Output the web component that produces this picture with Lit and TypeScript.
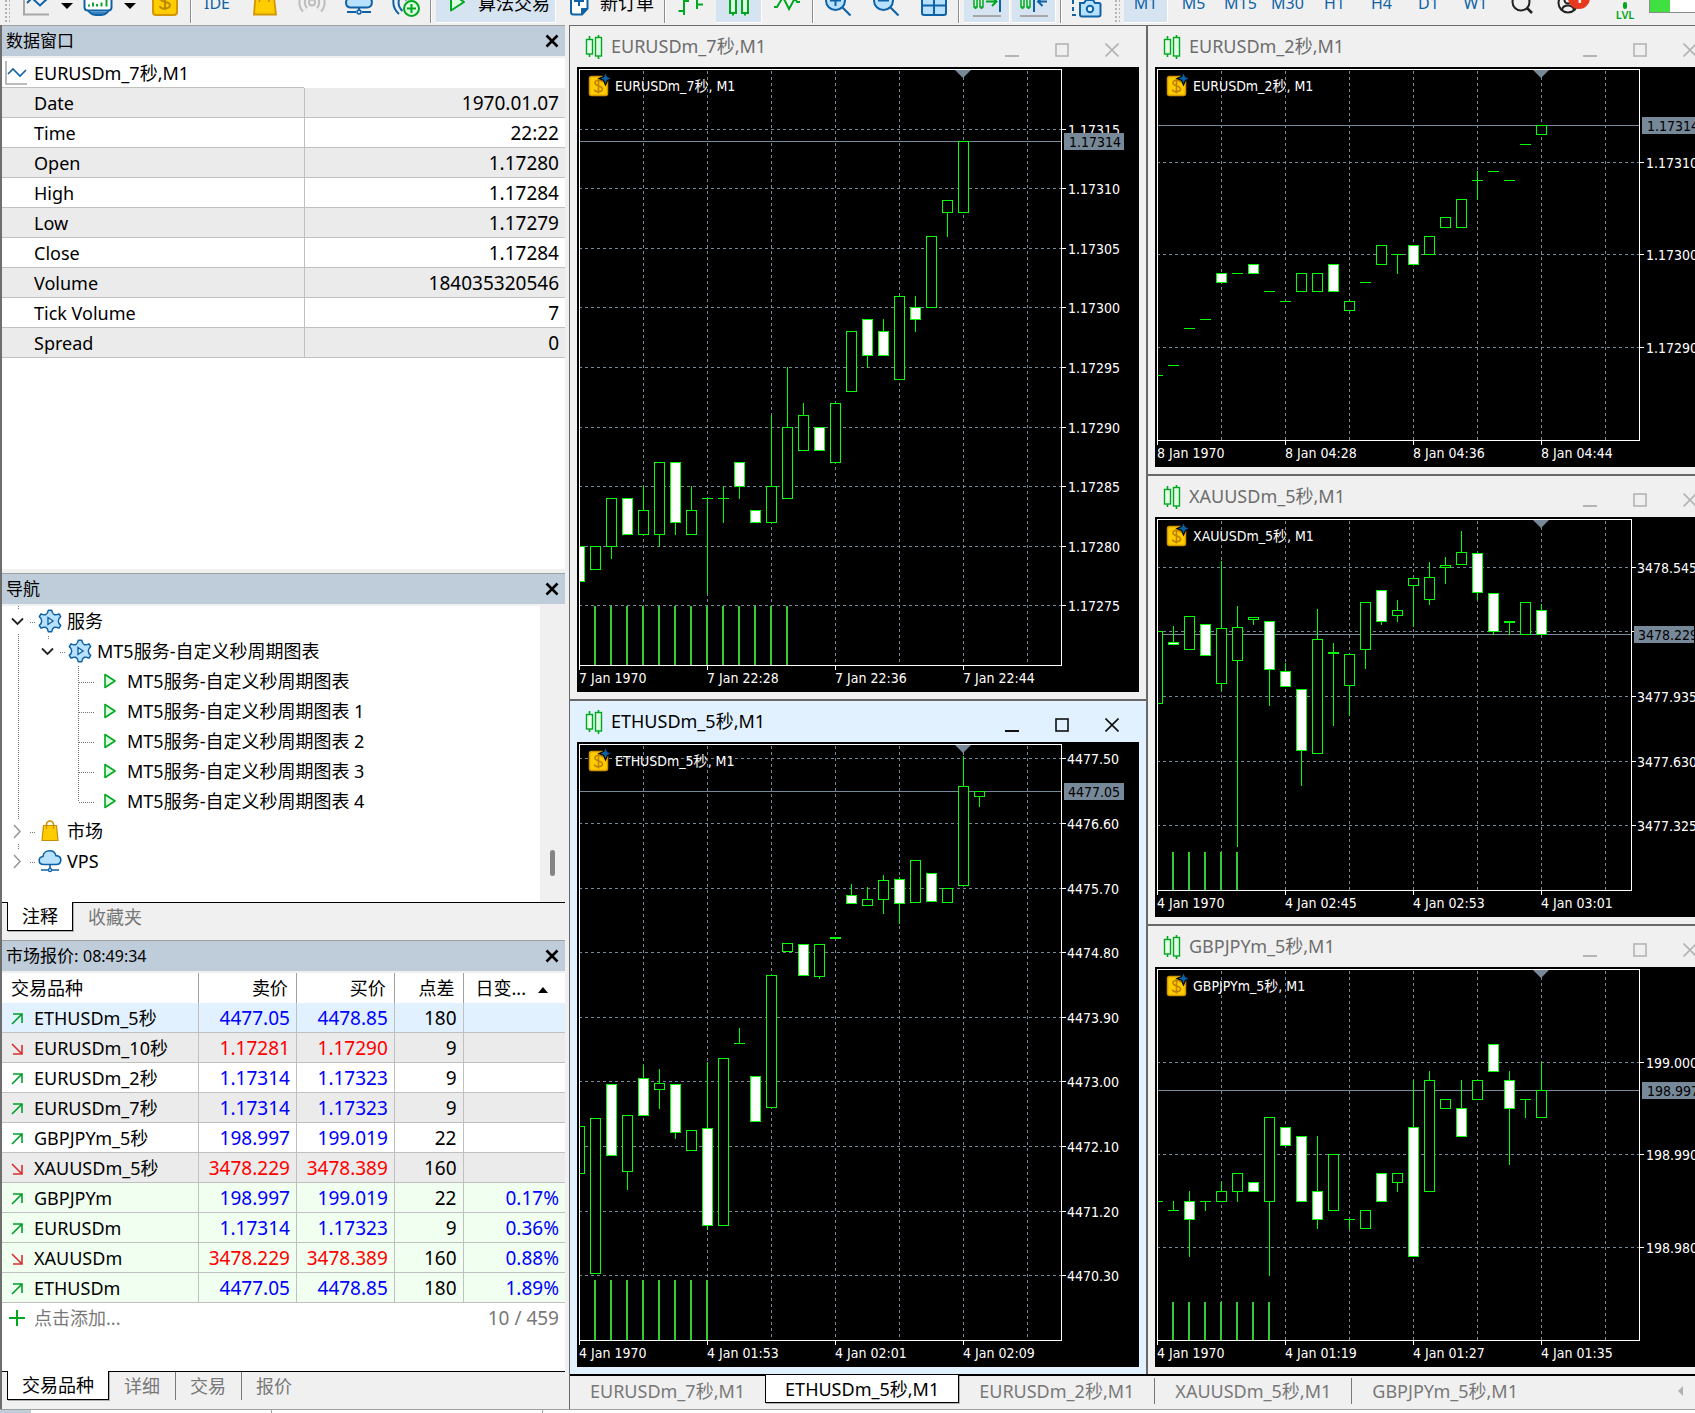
import { LitElement, html, svg, css, nothing } from "lit";
import { customElement, property } from "lit/decorators.js";
import { classMap } from "lit/directives/class-map.js";

/* ------------------------------------------------------------------ data */

/** slot, kind (h hollow, w white, d dash), body top, body bottom, wick high, wick low */
type Bar = [number, "h" | "w" | "d", number, number, number?, number?];

interface Chart {
  name: string;
  active?: boolean;
  height: number;
  frame: number;
  labelX: number;
  /** value of a level and pixels for one level; without it values are pixels */
  scale?: { ref: number; y: number; step: number };
  grid: [number, string][];
  last: [number, string];
  times: string[];
  volumeTop: number;
  volumes: number;
  bars: Bar[];
}

const eur7: Chart = {
  name: "EURUSDm_7秒",
  height: 625,
  frame: 484,
  labelX: 491,
  scale: { ref: 315, y: 62.3, step: 11.91 },
  grid: [
    [315, "1.17315"], [310, "1.17310"], [305, "1.17305"], [300, "1.17300"], [295, "1.17295"],
    [290, "1.17290"], [285, "1.17285"], [280, "1.17280"], [275, "1.17275"],
  ],
  last: [314, "1.17314"],
  times: ["7 Jan 1970", "7 Jan 22:28", "7 Jan 22:36", "7 Jan 22:44"],
  volumeTop: 539,
  volumes: 13,
  bars: [
    [0, "w", 280, 277], [1, "h", 280, 278], [2, "h", 284, 280, 284, 279], [3, "w", 284, 281],
    [4, "h", 283, 281, 285, 281], [5, "h", 287, 281, 287, 280], [6, "w", 287, 282, 287, 281],
    [7, "h", 283, 281, 285, 281], [8, "d", 284, 284, 284, 276], [9, "d", 284, 284, 285, 282],
    [10, "w", 287, 285, 287, 284], [11, "w", 283, 282], [12, "h", 285, 282, 291, 282],
    [13, "h", 290, 284, 295, 284], [14, "h", 291, 288, 292, 288], [15, "w", 290, 288],
    [16, "h", 292, 287], [17, "h", 298, 293], [18, "w", 299, 296, 299, 295],
    [19, "w", 298, 296, 299, 296], [20, "h", 301, 294], [21, "w", 300, 299, 301, 298],
    [22, "h", 306, 300], [23, "h", 309, 308, 309, 306], [24, "h", 314, 308],
  ],
};

const eth: Chart = {
  name: "ETHUSDm_5秒",
  active: true,
  height: 625,
  frame: 484,
  labelX: 490,
  grid: [
    [16, "4477.50"], [81, "4476.60"], [146, "4475.70"], [210, "4474.80"], [275, "4473.90"],
    [339, "4473.00"], [404, "4472.10"], [469, "4471.20"], [533, "4470.30"],
  ],
  last: [49, "4477.05"],
  times: ["4 Jan 1970", "4 Jan 01:53", "4 Jan 02:01", "4 Jan 02:09"],
  volumeTop: 538,
  volumes: 8,
  bars: [
    [0, "h", 384, 431], [1, "h", 376, 531], [2, "w", 342, 413], [3, "h", 373, 429, 373, 447],
    [4, "w", 336, 373, 323, 373], [5, "h", 341, 347, 327, 366], [6, "w", 342, 390, 342, 396],
    [7, "h", 388, 408], [8, "w", 386, 483, 320, 487], [9, "h", 316, 483], [10, "d", 301, 301, 286, 301],
    [11, "w", 334, 379], [12, "h", 233, 365], [13, "h", 201, 209], [14, "w", 202, 233],
    [15, "h", 202, 234, 202, 236], [16, "h", 195, 196], [17, "w", 153, 161, 142, 161],
    [18, "h", 157, 163, 145, 163], [19, "h", 138, 157, 133, 171], [20, "w", 137, 161, 135, 181],
    [21, "h", 118, 160], [22, "w", 131, 159], [23, "h", 146, 160], [24, "h", 44, 143, 14, 143],
    [25, "h", 49, 54, 49, 64],
  ],
};

const eur2: Chart = {
  name: "EURUSDm_2秒",
  height: 400,
  frame: 484,
  labelX: 491,
  scale: { ref: 310, y: 95.5, step: 9.24 },
  grid: [[310, "1.17310"], [300, "1.17300"], [290, "1.17290"]],
  last: [314, "1.17314"],
  times: ["8 Jan 1970", "8 Jan 04:28", "8 Jan 04:36", "8 Jan 04:44"],
  volumeTop: 335,
  volumes: 0,
  bars: [
    [0, "d", 287, 287], [1, "d", 288, 288], [2, "d", 292, 292], [3, "d", 293, 293], [4, "w", 298, 297],
    [5, "d", 298, 298], [6, "w", 299, 298], [7, "d", 296, 296], [8, "d", 295, 295], [9, "h", 298, 296],
    [10, "h", 298, 296], [11, "w", 299, 296], [12, "h", 295, 294], [13, "d", 297, 297],
    [14, "h", 301, 299], [15, "d", 300, 300, 300, 298], [16, "w", 301, 299], [17, "h", 302, 300],
    [18, "h", 304, 303], [19, "h", 306, 303], [20, "d", 308, 308, 309, 306], [21, "d", 309, 309],
    [22, "d", 308, 308], [23, "d", 312, 312], [24, "h", 314, 313],
  ],
};

const xau: Chart = {
  name: "XAUUSDm_5秒",
  height: 400,
  frame: 476,
  labelX: 482,
  grid: [[50, "3478.545"], [114, ""], [179, "3477.935"], [244, "3477.630"], [308, "3477.325"]],
  last: [117, "3478.229"],
  times: ["4 Jan 1970", "4 Jan 02:45", "4 Jan 02:53", "4 Jan 03:01"],
  volumeTop: 335,
  volumes: 5,
  bars: [
    [0, "h", 114, 186], [1, "w", 125, 127, 109, 127], [2, "h", 99, 132], [3, "w", 107, 138],
    [4, "h", 111, 166, 44, 173], [5, "h", 110, 143, 89, 329], [6, "h", 100, 102, 100, 107],
    [7, "w", 104, 152, 104, 188], [8, "w", 154, 169, 146, 169], [9, "w", 172, 233, 172, 268],
    [10, "h", 122, 236, 92, 236], [11, "h", 135, 136, 126, 208], [12, "h", 137, 168, 137, 198],
    [13, "h", 85, 132, 85, 151], [14, "w", 73, 104, 73, 107], [15, "h", 93, 98, 83, 104],
    [16, "h", 61, 68, 61, 109], [17, "h", 60, 82, 45, 87], [18, "h", 48, 50, 40, 66],
    [19, "h", 35, 47, 14, 47], [20, "w", 36, 75, 36, 82], [21, "w", 76, 114, 76, 117],
    [22, "h", 104, 105, 104, 117], [23, "h", 85, 117], [24, "w", 93, 117, 87, 117],
  ],
};

const gbp: Chart = {
  name: "GBPJPYm_5秒",
  height: 400,
  frame: 484,
  labelX: 491,
  scale: { ref: 1000, y: 95.5, step: 9.24 },
  grid: [[1000, "199.000"], [990, "198.990"], [980, "198.980"]],
  last: [997, "198.997"],
  times: ["4 Jan 1970", "4 Jan 01:19", "4 Jan 01:27", "4 Jan 01:35"],
  volumeTop: 335,
  volumes: 7,
  bars: [
    [0, "d", 985, 985], [1, "d", 984, 984, 985, 984], [2, "w", 985, 983, 986, 979],
    [3, "d", 985, 985, 985, 984], [4, "h", 986, 985, 987, 985], [5, "h", 988, 986, 988, 985],
    [6, "w", 987, 986], [7, "h", 994, 985, 994, 977], [8, "w", 993, 991], [9, "w", 992, 985],
    [10, "w", 986, 983, 992, 982], [11, "h", 990, 984], [12, "d", 983, 983, 983, 982],
    [13, "h", 984, 982], [14, "w", 988, 985], [15, "h", 988, 987, 988, 986],
    [16, "w", 993, 979, 998, 979], [17, "h", 998, 986, 999, 986], [18, "h", 996, 995],
    [19, "w", 995, 992, 998, 992], [20, "h", 998, 996], [21, "w", 1002, 999],
    [22, "w", 998, 995, 999, 989], [23, "d", 996, 996, 996, 994], [24, "h", 997, 994, 1000, 994],
  ],
};

const dataRows: [string, string][] = [
  ["Date", "1970.01.07"], ["Time", "22:22"], ["Open", "1.17280"], ["High", "1.17284"],
  ["Low", "1.17279"], ["Close", "1.17284"], ["Volume", "184035320546"], ["Tick Volume", "7"], ["Spread", "0"],
];

/** symbol, rising, bid, ask, spread, change, row tint */
const quotes: [string, boolean, string, string, string, string, string][] = [
  ["ETHUSDm_5秒", true, "4477.05", "4478.85", "180", "", "selected"],
  ["EURUSDm_10秒", false, "1.17281", "1.17290", "9", "", "gray"],
  ["EURUSDm_2秒", true, "1.17314", "1.17323", "9", "", "plain"],
  ["EURUSDm_7秒", true, "1.17314", "1.17323", "9", "", "gray"],
  ["GBPJPYm_5秒", true, "198.997", "199.019", "22", "", "plain"],
  ["XAUUSDm_5秒", false, "3478.229", "3478.389", "160", "", "gray"],
  ["GBPJPYm", true, "198.997", "199.019", "22", "0.17%", "green"],
  ["EURUSDm", true, "1.17314", "1.17323", "9", "0.36%", "green"],
  ["XAUUSDm", false, "3478.229", "3478.389", "160", "0.88%", "green"],
  ["ETHUSDm", true, "4477.05", "4478.85", "180", "1.89%", "green"],
];

const service = "MT5服务-自定义秒周期图表";

/* ----------------------------------------------------------------- icons */

const BLUE = "#0f62a6";
const SKY = "#b8e0ff";
const GREEN = "#00a820";

const icon28 = (body: unknown) =>
  html`<svg class="ic" width="28" height="28" viewBox="0 0 28 28" fill="none" stroke-width="2" aria-hidden="true">${body}</svg>`;

const candlePair = svg`
  <path d="M4.500 1v4M4.500 19v3M13.500 0v3M13.500 21v3" stroke="${GREEN}" stroke-width="1.600"/>
  <rect x="1.500" y="4.500" width="6" height="14.500" fill="#e8ffea" stroke="${GREEN}" stroke-width="1.400"/>
  <rect x="10.500" y="2.500" width="6" height="18.500" fill="#e0fbe4" stroke="${GREEN}" stroke-width="1.400"/>`;

const cloud = svg`
  <path d="M6 15.500C3 15.500 1.200 13.700 1.200 11.400C1.200 9.200 2.800 7.700 5 7.500C5.300 4.200 8 1.800 11.500 1.800C14.800 1.800 17.200 3.800 17.900 6.600C20.800 6.700 22.800 8.500 22.800 11C22.800 13.600 20.900 15.500 18 15.500Z" fill="${SKY}" stroke="${BLUE}" stroke-width="1.600"/>
  <path d="M12 16v4M3 21h7M14 21h7" stroke="${BLUE}" stroke-width="1.600"/>
  <circle cx="12" cy="21" r="1.600" fill="${SKY}" stroke="${BLUE}" stroke-width="1.200"/>`;

const gear = svg`
  <path d="M10.400 1.200h3.200q.8 3.600 2.800 4.500q1.800.6 4.600-.9l1.700 2.900q-2.400 2-2.400 4.300t2.400 4.300l-1.700 2.900q-2.800-1.500-4.600-.9q-2 .9-2.800 4.500h-3.200q-.8-3.600-2.800-4.500q-1.800-.6-4.600.9l-1.700-2.900q2.400-2 2.400-4.300t-2.400-4.300l1.700-2.900q2.800 1.500 4.600.9q2-.9 2.800-4.500Z" fill="${SKY}" stroke="${BLUE}" stroke-width="1.500" stroke-linejoin="round"/>
  <path d="M10 8.500v7l5-3.500Z" fill="#e4f4ff" stroke="${BLUE}" stroke-width="1.400"/>`;

const bag = svg`
  <path d="M8.500 8V5.500a3.500 3.500 0 0 1 7 0V8" fill="none" stroke="#c98f00" stroke-width="1.600"/>
  <path d="M5.500 6.500h13l1.500 15H4Z" fill="#fc0" stroke="#c98f00" stroke-width="1.200"/>
  <path d="M8.500 10V6M15.500 10V6" stroke="#c98f00" stroke-width="1.200"/>`;

const playTree = svg`<path d="M7 5.500v13l10-6.500Z" fill="#dcffe0" stroke="${GREEN}" stroke-width="1.600" stroke-linejoin="round"/>`;

const treeIcons: Record<string, unknown> = { gear, bag, cloud, play: playTree };

const tb = {
  chart: icon28(svg`<path d="M2 0v25.500h25" stroke="#a8a8a8"/><path d="M5 14l5-5 8 7.500 8-7.500" stroke="${BLUE}"/>`),
  monitor: icon28(svg`<path d="M3 19c2 5 5 7 9 7h5c4 0 7-2 9-7" fill="${SKY}" stroke="${BLUE}"/><path d="M0.500 0v18q0 3.500 3.500 3.500h20q3.500 0 3.500-3.500V0Z" fill="#fff" stroke="${BLUE}"/><path d="M5 17.500v-2M9 17.500v-4M13 17.500v-2.500M17.500 17.500v-4M22.500 17.500v-8" stroke="#12a52c"/><path d="M6 24h17" stroke="${BLUE}" stroke-width="1.500"/>`),
  gold: icon28(svg`<rect x="2" y="-1" width="24" height="27" rx="3" fill="#fc0" stroke="#d29600"/><path d="M19 8c0-3-10-4-10 1s10 3 10 7-10 5-10 1M14 2v19" stroke="#b98a00" stroke-width="2"/>`),
  bag: icon28(svg`<path d="M5 0h17l3 25.500H3Z" fill="#fc0" stroke="#d29600" stroke-width="1.800"/><path d="M8.500 0v13M18 0v13" stroke="#c08a00" stroke-width="1.500"/>`),
  signal: icon28(svg`<path d="M5 22.500a13 13 0 0 1 0-18M23 22.500a13 13 0 0 0 0-18M9 19a8 8 0 0 1 0-11M19 19a8 8 0 0 0 0-11" stroke="#bdbdbd"/><circle cx="14" cy="13.500" r="3" stroke="#bdbdbd"/>`),
  cloud: icon28(svg`<path d="M6 18.500C-1 18.500 0 9 5 9C6 0 21-1 22 7C28 8 29 18.500 22 18.500Z" fill="${SKY}" stroke="${BLUE}"/><path d="M14 19v2M2 23h9M17 23h9" stroke="${BLUE}"/><circle cx="14" cy="23" r="2" fill="${SKY}" stroke="${BLUE}" stroke-width="1.500"/>`),
  antenna: icon28(svg`<path d="M7 25a17 17 0 0 1-5-17M10.500 22a12 12 0 0 1-3-13M14 11.500a3 3 0 0 1 3-3" stroke="${BLUE}"/><circle cx="19.500" cy="19.500" r="7.500" fill="#dcffe0" stroke="${GREEN}"/><path d="M19.500 15v9M15 19.500h9" stroke="${GREEN}"/>`),
  play: icon28(svg`<path d="M8 4v17.500l13-8.500Z" fill="#dcffe0" stroke="${GREEN}" stroke-width="2" stroke-linejoin="round"/>`),
  doc: icon28(svg`<path d="M6 0v23q0 2.500 2.500 2.500H17l5.500-6V0" fill="#fff" stroke="${BLUE}"/><path d="M16.500 26v-6.500h6Z" fill="${BLUE}" stroke="${BLUE}" stroke-width="1"/><path d="M14 5v12M9 12h10" stroke="${BLUE}"/>`),
  bars: icon28(svg`<path d="M7 4v22M1.500 22H7M7 12h5M20 2v18M20 15.500h6" stroke="${GREEN}"/>`),
  candles: icon28(svg`<path d="M8 24v2.500M20 24v2.500" stroke="${GREEN}"/><rect x="5" y="2" width="6" height="22" fill="#dcffe0" stroke="${GREEN}"/><rect x="17" y="0" width="6" height="24" fill="#dcffe0" stroke="${GREEN}"/>`),
  line: icon28(svg`<path d="M1 18h3L10 8l6 12 6-11 2 4h3" stroke="${GREEN}"/>`),
  zoomIn: icon28(svg`<path d="M18.500 18.500l8 8" stroke="${BLUE}" stroke-width="2.200"/><circle cx="11.500" cy="11.500" r="9.500" fill="${SKY}" stroke="${BLUE}"/><path d="M11.500 6v11M6 11.500h11" stroke="${BLUE}"/>`),
  zoomOut: icon28(svg`<path d="M18.500 18.500l8 8" stroke="${BLUE}" stroke-width="2.200"/><circle cx="11.500" cy="11.500" r="9.500" fill="${SKY}" stroke="${BLUE}"/><path d="M6 11.500h11" stroke="${BLUE}"/>`),
  tiles: icon28(svg`<rect x="2" y="0" width="24" height="26" rx="2" fill="${SKY}" stroke="${BLUE}"/><path d="M14 0v26M2 16.500h24" stroke="${BLUE}"/>`),
  shiftRight: icon28(svg`<rect x="1" y="2" width="3" height="16" fill="#dcffe0" stroke="${GREEN}" stroke-width="1.500"/><rect x="7" y="0" width="3" height="18" fill="#dcffe0" stroke="${GREEN}" stroke-width="1.500"/><path d="M2.500 18v2M8.500 18v2" stroke="${GREEN}"/><path d="M13 12.500h10M19 8l4.500 4.500-4.500 4.500" stroke="${GREEN}"/><path d="M27 0v23" stroke="${BLUE}"/><path d="M0 27h28" stroke="#a8a8a8"/>`),
  shiftLeft: icon28(svg`<rect x="1" y="2" width="3" height="16" fill="#dcffe0" stroke="${GREEN}" stroke-width="1.500"/><rect x="7" y="0" width="3" height="18" fill="#dcffe0" stroke="${GREEN}" stroke-width="1.500"/><path d="M2.500 18v2M8.500 18v2" stroke="${GREEN}"/><path d="M14 0v23M18 12.500h9M22.500 8L18 12.500l4.500 4.500" stroke="${BLUE}"/><path d="M0 27h28" stroke="#a8a8a8"/>`),
  camera: icon28(svg`<path d="M1 4v22h5" stroke="${BLUE}" stroke-dasharray="4 3"/><path d="M8 14h4l2-3h7l2 3h4q1.500 0 1.500 1.500v10q0 2-2 2H10q-2 0-2-2V14Z" fill="${SKY}" stroke="${BLUE}"/><circle cx="18" cy="20" r="3.200" fill="#e4f4ff" stroke="${BLUE}"/>`),
  search: icon28(svg`<circle cx="13" cy="13" r="8.500" stroke="#222"/><path d="M19 19l5 5" stroke="#222" stroke-width="2.500"/>`),
  user: html`<svg class="ic" width="36" height="28" viewBox="0 0 36 28" fill="none" aria-hidden="true"><circle cx="12" cy="14" r="9.500" stroke="#222" stroke-width="2"/><circle cx="12" cy="11" r="3.500" stroke="#222" stroke-width="2"/><path d="M6 21c1-6 11-6 12 0" stroke="#222" stroke-width="2"/><circle cx="23" cy="9" r="11" fill="#e8391f"/><text class="badge" x="23" y="14">1</text></svg>`,
};

/* ------------------------------------------------------------ chart view */

@customElement("chart-window")
class ChartWindow extends LitElement {
  @property({ attribute: false }) chart!: Chart;

  static styles = css`
    :host { display: block; border-right: 2px solid #696969; border-bottom: 2px solid #696969; }
    :host(.last) { border-bottom: 0; }
    .window { padding: 0 7px 7px; background: #f0f0f0; color: #6d6d6d; }
    .window.active { background: #e1f1ff; color: #000; }
    .bar { display: flex; align-items: center; height: 41px; padding: 0 2px 0 8px; }
    .bar h2 { flex: 1; margin: 0 0 2px 8px; font-size: 18px; line-height: 38px; font-weight: 400; white-space: nowrap; }
    button { display: flex; justify-content: center; align-items: center; width: 50px; height: 34px; margin-top: 7px; padding: 0; border: 0; background: none; color: #b4b4b4; }
    .active button { color: #111; }
    .plot { display: block; width: 100%; background: #000; }
    .plot text { font: 14px "DejaVu Sans Condensed", "DejaVu Sans", "Noto Sans CJK SC", sans-serif; fill: #fff; white-space: pre; }
    .plot .tag { fill: #000; }
    .grid { stroke: #778899; stroke-dasharray: 3 3; }
    .axis { stroke: #fff; fill: none; }
    .up { stroke: #0f0; fill: #000; }
    .down { stroke: #0f0; fill: #fff; }
    .wick { stroke: #0f0; }
    .volume { fill: #32cd32; }
    .slate { fill: #778899; }
  `;

  private y(v: number) {
    const s = this.chart.scale;
    return s ? Math.floor(s.y + (s.ref - v) * s.step) : v;
  }

  private drawBar([slot, kind, top, bottom, high, low]: Bar) {
    const x = 2 + slot * 16;
    const a = this.y(top);
    const b = this.y(bottom);
    const wick = high === undefined || low === undefined ? nothing
      : svg`<line class="wick" x1=${x + 0.5} x2=${x + 0.5} y1=${this.y(high)} y2=${this.y(low) + 1}/>`;
    const body = kind === "d"
      ? svg`<line class="wick" x1=${x - 5} x2=${x + 6} y1=${a + 0.5} y2=${a + 0.5}/>`
      : svg`<rect class=${kind === "h" ? "up" : "down"} x=${x - 4.5} y=${a + 0.5} width="10" height=${b - a}/>`;
    return svg`${wick}${body}`;
  }

  render() {
    const c = this.chart;
    const base = c.height - 27;
    const last = this.y(c.last[0]);
    const clip = `plot-${c.height}`;
    return html`
      <section class=${classMap({ window: true, active: !!c.active })}>
        <header class="bar">
          <svg width="18" height="24" viewBox="0 0 18 24" aria-hidden="true">${candlePair}</svg>
          <h2>${c.name},M1</h2>
          <button aria-label="最小化"><svg width="14" height="14" stroke="currentColor" stroke-width="2"><path d="M0 13h14"/></svg></button>
          <button aria-label="最大化"><svg width="14" height="14" fill="none" stroke="currentColor" stroke-width="1.600"><rect x="1" y="1" width="12" height="12"/></svg></button>
          <button aria-label="关闭"><svg width="14" height="14" stroke="currentColor" stroke-width="1.600"><path d="M0.500 0.500l13 13M13.500 0.500l-13 13"/></svg></button>
        </header>
        <svg class="plot" height=${c.height} role="img" aria-label=${c.name}>
          <clipPath id=${clip}><rect x="2" y="2" width=${c.frame - 2} height=${base}/></clipPath>
          ${[66, 130, 194, 258, 322, 386, 450].map((x) => svg`<line class="grid" x1=${x + 0.5} x2=${x + 0.5} y1="4" y2=${base}/>`)}
          ${c.grid.map(([v, label]) => {
            const y = this.y(v);
            return svg`<line class="grid" x1="2" x2=${c.frame} y1=${y + 0.5} y2=${y + 0.5}/>
              <line class="axis" x1=${c.frame} x2=${c.frame + 5} y1=${y + 0.5} y2=${y + 0.5}/>
              <text x=${c.labelX} y=${y + 6}>${label}</text>`;
          })}
          <rect class="slate" x="2" y=${last} width=${c.frame - 2} height="1"/>
          <g clip-path="url(#${clip})">
            ${Array.from({ length: c.volumes }, (_, i) => svg`<rect class="volume" x=${17 + i * 16} y=${c.volumeTop} width="2" height=${base - c.volumeTop}/>`)}
            ${c.bars.map((b) => this.drawBar(b))}
          </g>
          <path class="slate" d="M378 3h16l-8 8z"/>
          <rect class="axis" x="2.5" y="2.5" width=${c.frame - 2} height=${base - 2}/>
          ${c.times.map((t, i) => svg`<line class="axis" x1=${2.5 + i * 128} x2=${2.5 + i * 128} y1=${base} y2=${base + 5}/>
            <text x=${2 + i * 128} y=${base + 18}>${t}</text>`)}
          <rect class="slate" x=${c.frame + 3} y=${last - 8} width="60" height="17"/>
          <text class="tag" x=${c.labelX + 1} y=${last + 6}>${c.last[1]}</text>
          <rect x="12.500" y="9.500" width="18" height="19" rx="2" fill="#fc0" stroke="#d29600" stroke-width="1.500"/>
          <path d="M25.500 15.500c0-3-7.500-3-7.500.5s7.500 2.500 7.500 6-8 3.500-8 .5M21.500 11.500v15" fill="none" stroke="#c08000" stroke-width="1.600"/>
          <path d="M28.500 6.500l1.500 3.500 3.500 1.500-3.500 1.500-1.500 3.500-1.500-3.500-3.500-1.500 3.500-1.500z" fill="#0a5fa5" stroke="#000" stroke-width="2.400" paint-order="stroke"/>
          <text x="38" y="24">${c.name}, M1</text>
        </svg>
      </section>`;
  }
}

/* -------------------------------------------------------------- app root */

@customElement("app-root")
class AppRoot extends LitElement {
  static styles = css`
    :host { display: block; font-family: "Noto Sans", "Noto Sans CJK SC", sans-serif; font-size: 18px; color: #000; }
    * { box-sizing: border-box; }
    button { font: inherit; color: inherit; border: 0; padding: 0; background: none; white-space: nowrap; }
    .app { display: flex; flex-direction: column; min-height: 100vh; background: #f0f0f0; overflow: hidden; }

    /* toolbar: its upper half lies above the window edge */
    .toolbar { display: flex; align-items: flex-end; height: 25px; padding-bottom: 2px; overflow: hidden; }
    .toolbar > * { display: flex; flex: none; align-items: center; justify-content: center; height: 40px; }
    .ic { display: block; flex: none; overflow: visible; }
    .badge { font: bold 15px "Noto Sans", sans-serif; fill: #fff; text-anchor: middle; }
    .w44 { width: 44px; } .w46 { width: 46px; } .w47 { width: 47px; } .w48 { width: 48px; } .w50 { width: 50px; }
    .on { background: #d6e4f2; border-right: 1px solid #fff; border-bottom: 1px solid #fff; }
    .gap { width: 4px; }
    .gap2 { width: 2px; }
    .grip { width: 14px; }
    .grip::before { content: ""; width: 6px; height: 40px; background: radial-gradient(circle, #b5b5b5 1px, transparent 1px) 0 0 / 4px 4px; }
    .sep { width: 2px; border-left: 1px solid #8c8c8c; background: #fff; }
    .caret { width: 17px; }
    .caret::before { content: ""; border: 6px solid transparent; border-top-color: #000; border-bottom: 0; margin-top: 6px; }
    .toolbar .wide { width: 120px; justify-content: flex-start; padding-left: 7px; gap: 7px; line-height: 40px; }
    .toolbar .order { width: 108px; justify-content: flex-start; padding-left: 9px; gap: 7px; line-height: 40px; }
    .tf { color: #0f62a6; font-size: 16px; }
    .level { flex-direction: column; color: #00a820; font-size: 11px; font-weight: 600; line-height: 12px; padding-top: 17px; }
    .level i { width: 4px; height: 7px; border: 2px solid #00a820; border-radius: 2px; }
    .toolbar .battery { flex: 1; height: 30px; margin-bottom: 10px; border: 1px solid #8c8c8c; border-right: 0; background: #fff; justify-content: flex-start; }
    .battery::before { content: ""; width: 20px; height: 100%; background: #40e040; }

    .main { flex: 1; display: grid; grid-template-columns: 569px minmax(0, 1fr); }
    .side { display: grid; grid-template-rows: 548fr 367fr 469fr; padding-right: 4px; border-left: 2px solid #6e6e6e; }
    .panel { display: flex; flex-direction: column; min-height: 0; border-top: 1px solid #a0a0a0; }
    .head { display: flex; justify-content: space-between; align-items: center; height: 30px; margin-bottom: 2px; padding: 0 6px 0 4px; background: #bfccda; }
    .head h2 { margin: 0; font-size: 17px; font-weight: 400; line-height: 30px; }
    .head span { font-size: 16px; }
    .head button { display: flex; }
    .body { flex: 1; background: #fff; min-height: 0; }
    .data .body { margin-bottom: 4px; }

    table { width: 100%; border-spacing: 0; table-layout: fixed; line-height: 28px; }
    td, th { height: 30px; padding: 0; border-bottom: 1px solid #c0c0c0; font-weight: 400; text-align: left; white-space: nowrap; }
    .values caption { display: flex; align-items: center; gap: 6px; height: 30px; padding-left: 3px; border-bottom: 1px solid #c0c0c0; }
    .values tr:nth-child(odd) { background: #ebebeb; }
    .values th { padding-left: 32px; }
    .values td { border-left: 1px solid #c0c0c0; }
    td { padding-right: 6px; text-align: right; font-size: 19px; }

    .quotes thead th { border-bottom: 0; border-left: 1px solid #a0a0a0; padding-right: 8px; text-align: right; }
    .quotes thead th:first-child { border-left: 0; padding-left: 9px; text-align: left; }
    .quotes thead th:last-child { padding-left: 12px; text-align: left; }
    .sort { display: inline-block; margin-left: 12px; border: 5px solid transparent; border-bottom: 6px solid #000; border-top: 0; vertical-align: middle; }
    .quotes tbody td { border-left: 1px solid #c0c0c0; }
    .quotes tbody th svg { margin: 0 11px 0 9px; }
    .selected { background: #e1f1ff; }
    .gray { background: #ebebeb; }
    .green { background: #f0fff0; }
    .rise { color: #00f; }
    .fall { color: #f00; }
    .add { display: flex; align-items: center; justify-content: space-between; height: 30px; padding: 0 6px 0 7px; color: #787878; }
    .add button { display: flex; align-items: center; gap: 9px; line-height: 30px; }
    .add span { font-size: 19px; }

    .tree { display: flex; }
    .tree ul { flex: 1; margin: 0; padding: 0; list-style: none; }
    .tree li { display: flex; align-items: center; height: 30px; line-height: 30px; }
    .tree li span { margin-left: 5px; }
    .scroll { width: 25px; padding: 244px 10px 0; background: #f0f0f0; }
    .scroll::before { content: ""; display: block; width: 5px; height: 26px; border-radius: 3px; background: #858585; }

    .tabs { display: flex; height: 38px; padding-left: 5px; border-top: 1px solid #000; color: #787878; }
    .tabs button { height: 28px; padding: 0 15px; line-height: 28px; }
    .market .tabs button + button + button, .docs button.split { border-left: 1px solid #787878; padding-left: 14px; }
    .tabs .current { height: 29px; margin-top: -1px; padding: 0 14px; border: 1px solid #000; border-top: 0; background: #fff; color: #000; box-shadow: 1px 1px #b0b0b0; }

    .space { display: flex; flex-direction: column; min-width: 0; border: solid #696969; border-width: 1px 0 0 1px; }
    .desk { flex: 1; display: grid; grid-template-columns: 578px 578px; overflow: hidden; }
    .docs { height: 35px; padding: 0 12px 0 0; border-top-width: 2px; }
    .docs button, .docs button.split { height: 26px; padding: 0 20px; margin-top: 2px; line-height: 24px; }
    .docs .current { height: 28px; margin-top: -1px; padding: 0 19px; line-height: 28px; }
    .docs .prev { margin-left: auto; padding: 0; }
    .prev::before { content: ""; display: block; border: 5px solid transparent; border-right-color: #b0b0b0; border-left: 0; }

    .status { display: flex; height: 4px; border-top: 1px solid #a0a0a0; background: #fff; }
    .status i { width: 271px; border-right: 1px solid #a0a0a0; }
    .status i:first-child { width: 31px; border: 0; background: #bfccda; }
    .status i:nth-child(2) { width: 241px; }
  `;

  private closeButton() {
    return html`<button aria-label="关闭"><svg width="14" height="14" stroke="#000" stroke-width="2.600"><path d="M1.500 1.500l11 11M12.500 1.500l-11 11"/></svg></button>`;
  }

  private toolbar() {
    const tool = (w: string, label: string, body: unknown) => html`<button class=${w} aria-label=${label}>${body}</button>`;
    return html`<nav class="toolbar">
      <i class="grip"></i>
      ${tool("w44", "图表", tb.chart)}<button class="caret" aria-label="图表菜单"></button>
      ${tool("w46", "模板", tb.monitor)}<button class="caret" aria-label="模板菜单"></button><i class="gap2"></i>
      ${tool("w50", "交易品种", tb.gold)}<i class="sep"></i>
      <button class="w50 tf">IDE</button>${tool("w46", "市场", tb.bag)}${tool("w48", "信号", tb.signal)}
      ${tool("w46", "VPS", tb.cloud)}${tool("w48", "添加", tb.antenna)}<i class="sep"></i><i class="gap"></i>
      <button class="wide on">${tb.play}算法交易</button><button class="order">${tb.doc}新订单</button><i class="sep"></i>
      ${tool("w50", "柱形图", tb.bars)}${tool("w46 on", "蜡烛图", tb.candles)}${tool("w50", "线图", tb.line)}<i class="sep"></i>
      ${tool("w48", "放大", tb.zoomIn)}${tool("w48", "缩小", tb.zoomOut)}${tool("w48", "平铺", tb.tiles)}<i class="sep"></i><i class="gap"></i>
      ${tool("w46 on", "自动滚动", tb.shiftRight)}<i class="gap2"></i>${tool("w44 on", "图表平移", tb.shiftLeft)}<i class="gap"></i><i class="sep"></i>
      ${tool("w48", "截图", tb.camera)}<i class="grip"></i>
      <button class="w44 tf on">M1</button><i class="gap2"></i>
      ${["M5", "M15", "M30", "H1", "H4", "D1", "W1"].map((t) => html`<button class="w47 tf">${t}</button>`)}
      ${tool("w46", "搜索", tb.search)}<i class="gap"></i>${tool("w50", "账户", tb.user)}
      <i class="gap2"></i><button class="w48 level"><i></i>LVL</button><i class="battery"></i>
    </nav>`;
  }

  private treeRow(prefix: number, lines: unknown, icon: string, text: string) {
    return html`<li>
      <svg width=${prefix} height="30" fill="none" stroke="#777" stroke-width="1" stroke-dasharray="1 1" aria-hidden="true">${lines}</svg>
      <svg width="24" height="24" viewBox="0 0 24 24" fill="none" aria-hidden="true">${treeIcons[icon]}</svg>
      <span>${text}</span>
    </li>`;
  }

  private navigator() {
    const open = (x: number) => svg`<path d="M${x} 12.500l5.500 5.500 5.500-5.500" stroke="#222" stroke-width="1.800" stroke-dasharray="none"/>`;
    const shut = svg`<path d="M12 9l6 6.500-6 6.500" stroke="#999" stroke-width="1.600" stroke-dasharray="none"/>`;
    return html`<ul>
      ${this.treeRow(36, svg`<path d="M16.500 0v3M16.500 28v2M28 16.500h5"/>${open(10)}`, "gear", "服务")}
      ${this.treeRow(66, svg`<path d="M16.500 0v30M46.500 0v3M58 16.500h5"/>${open(40)}`, "gear", service)}
      ${["", " 1", " 2", " 3", " 4"].map((n, i) =>
        this.treeRow(96, svg`<path d=${`M16.500 0v30M76.500 0v${i === 4 ? 16 : 30}M77 16.500h16`}/>`, "play", service + n))}
      ${this.treeRow(36, svg`<path d="M16.500 0v3M16.500 28v2M28 16.500h5"/>${shut}`, "bag", "市场")}
      ${this.treeRow(36, svg`<path d="M16.500 0v3M28 16.500h5"/>${shut}`, "cloud", "VPS")}
    </ul>`;
  }

  private arrow(up: boolean) {
    return up
      ? html`<svg width="12" height="12" fill="none" stroke="#00a028" stroke-width="1.600"><path d="M1 11L11 1M2 1h9v9"/></svg>`
      : html`<svg width="12" height="12" fill="none" stroke="#d83030" stroke-width="1.600"><path d="M1 1l10 10M11 2v9H2"/></svg>`;
  }

  render() {
    return html`<div class="app">
      ${this.toolbar()}
      <div class="main">
        <aside class="side">
          <section class="panel data">
            <div class="head"><h2>数据窗口</h2>${this.closeButton()}</div>
            <div class="body">
              <table class="values">
                <caption><svg width="23" height="24" fill="none" stroke-width="1.600" aria-hidden="true"><path d="M1 0v23h21" stroke="#a8a8a8"/><path d="M3 13l5-5 7 7 6-6" stroke="${BLUE}"/></svg>EURUSDm_7秒,M1</caption>
                <colgroup><col style="width:53.6%"><col></colgroup>
                <tbody>${dataRows.map(([k, v]) => html`<tr><th scope="row">${k}</th><td>${v}</td></tr>`)}</tbody>
              </table>
            </div>
          </section>
          <section class="panel nav">
            <div class="head"><h2>导航</h2>${this.closeButton()}</div>
            <div class="body tree">${this.navigator()}<div class="scroll"></div></div>
            <div class="tabs"><button class="current">注释</button><button>收藏夹</button></div>
          </section>
          <section class="panel market">
            <div class="head"><h2>市场报价: <span>08:49:34</span></h2>${this.closeButton()}</div>
            <div class="body">
              <table class="quotes">
                <colgroup><col style="width:34.8%"><col style="width:17.4%"><col style="width:17.4%"><col style="width:12.2%"><col></colgroup>
                <thead><tr><th>交易品种</th><th>卖价</th><th>买价</th><th>点差</th><th>日变...<i class="sort"></i></th></tr></thead>
                <tbody>${quotes.map(([name, up, bid, ask, spread, change, tint]) => html`<tr class=${tint}>
                  <th scope="row">${this.arrow(up)}${name}</th>
                  <td class=${up ? "rise" : "fall"}>${bid}</td><td class=${up ? "rise" : "fall"}>${ask}</td>
                  <td>${spread}</td><td class="rise">${change}</td></tr>`)}</tbody>
              </table>
              <div class="add"><button><svg width="16" height="16" stroke="#00a820" stroke-width="2"><path d="M8 0v16M0 8h16"/></svg>点击添加...</button><span>10 / 459</span></div>
            </div>
            <div class="tabs"><button class="current">交易品种</button><button>详细</button><button>交易</button><button>报价</button></div>
          </section>
        </aside>
        <main class="space">
          <div class="desk">
            <div>
              <chart-window .chart=${eur7}></chart-window>
              <chart-window class="last" .chart=${eth}></chart-window>
            </div>
            <div>
              <chart-window .chart=${eur2}></chart-window>
              <chart-window .chart=${xau}></chart-window>
              <chart-window class="last" .chart=${gbp}></chart-window>
            </div>
          </div>
          <div class="tabs docs">
            <button>EURUSDm_7秒,M1</button><button class="current">ETHUSDm_5秒,M1</button><button>EURUSDm_2秒,M1</button>
            <button class="split">XAUUSDm_5秒,M1</button><button class="split">GBPJPYm_5秒,M1</button>
            <button class="prev" aria-label="向左滚动"></button>
          </div>
        </main>
      </div>
      <footer class="status"><i></i><i></i><i></i></footer>
    </div>`;
  }
}
